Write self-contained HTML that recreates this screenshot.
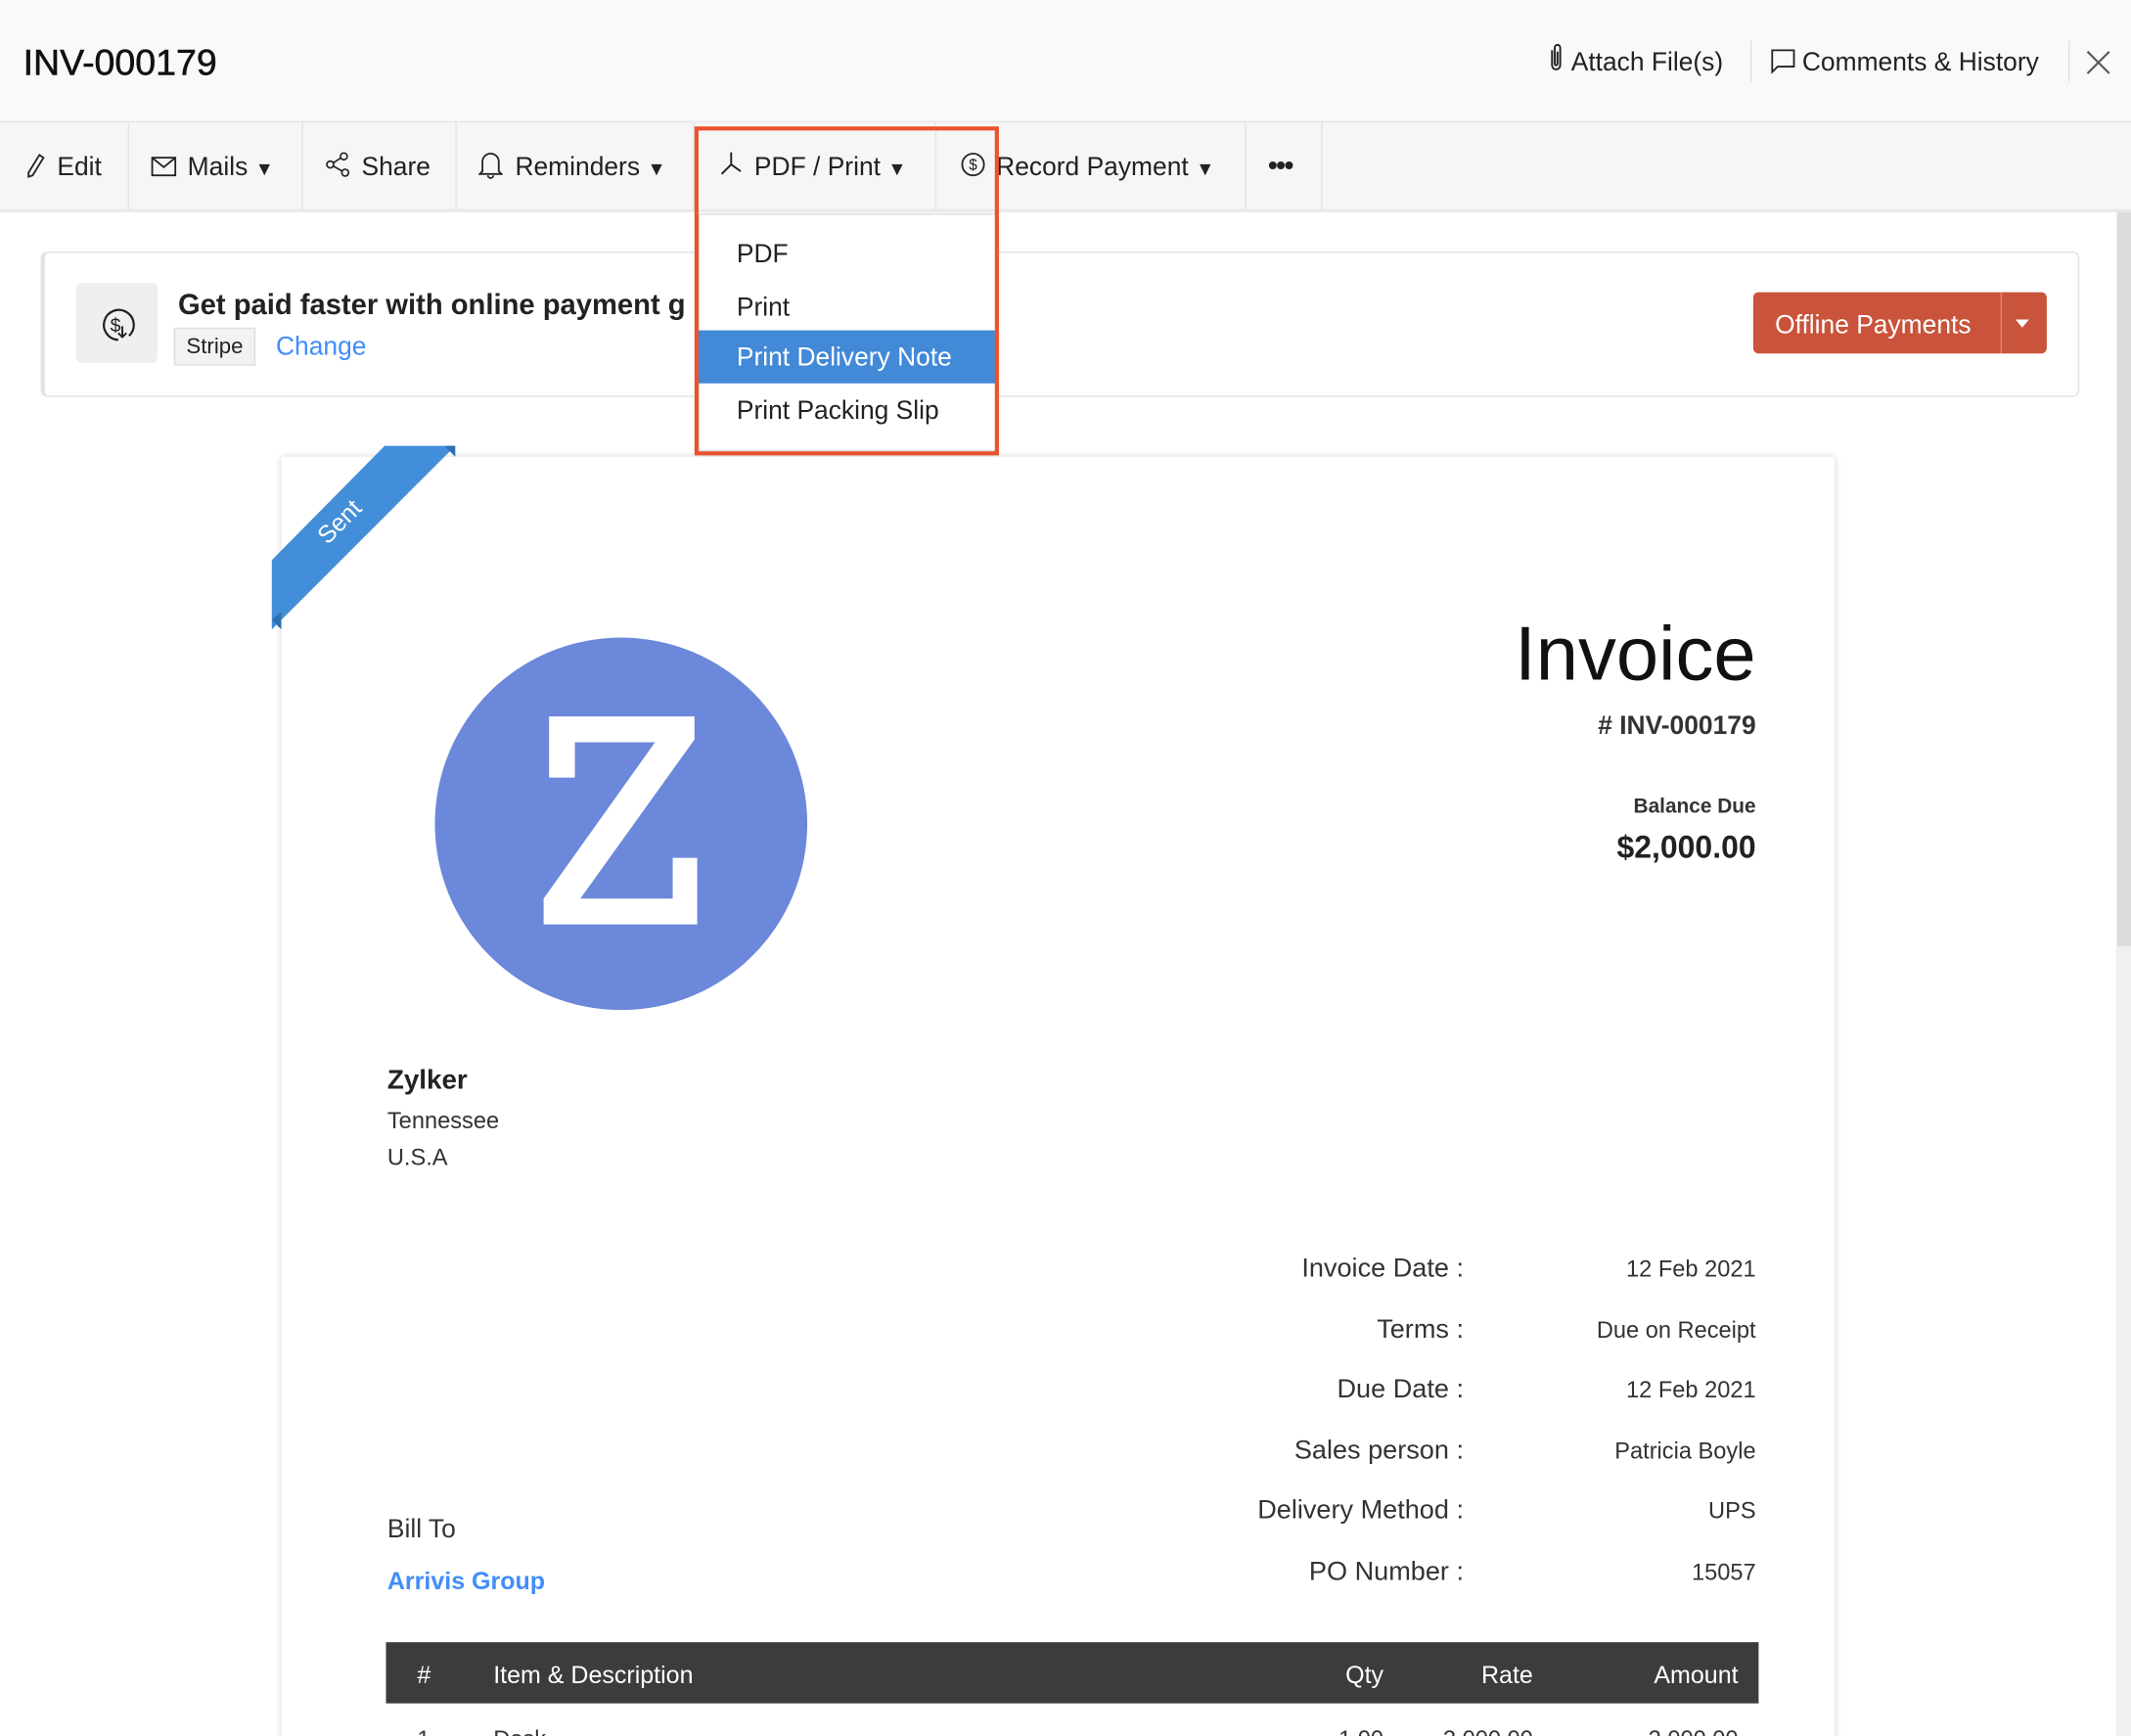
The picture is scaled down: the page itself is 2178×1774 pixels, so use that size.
<!DOCTYPE html>
<html><head><meta charset="utf-8"><style>
html,body{margin:0;padding:0;overflow:hidden;background:#fff}
#w{position:absolute;left:0;top:0;width:1568px;height:1277px;transform:scale(1.38903,1.3892);transform-origin:0 0;font-family:"Liberation Sans",sans-serif;color:#222;overflow:hidden;background:#fff}
.a{position:absolute;white-space:nowrap}
.tb{font-size:19px;color:#222;top:113px}
.sep{position:absolute;top:90px;width:1px;height:65px;background:#e4e4e4}
.lbl{position:absolute;right:491px;font-size:19.5px;color:#333;white-space:nowrap}
.val{position:absolute;right:276px;font-size:17px;color:#333;white-space:nowrap}
</style></head><body><div id="w">
<div class="a" style="left:0;top:0;width:1568px;height:89px;background:#f9f9f9;border-bottom:1px solid #e6e6e6"></div>
<div class="a" style="left:17px;top:31px;font-size:27px;font-weight:500;color:#111;-webkit-text-stroke:0.4px #111">INV-000179</div>
<svg class="a" style="left:1138px;top:31px" width="14" height="24" viewBox="0 0 14 24"><path d="M4 6v11a3 3 0 006 0V4a2 2 0 00-4 0v12a1 1 0 002 0V7" fill="none" stroke="#222" stroke-width="1.4"/></svg>
<div class="a" style="left:1156px;top:36px;font-size:19px">Attach File(s)</div>
<div class="a" style="left:1288px;top:30px;width:1px;height:30px;background:#ddd"></div>
<svg class="a" style="left:1302px;top:35px" width="20" height="20" viewBox="0 0 20 20"><path d="M2 2h16v12H6l-4 4z" fill="none" stroke="#222" stroke-width="1.3"/></svg>
<div class="a" style="left:1326px;top:36px;font-size:19px">Comments &amp; History</div>
<div class="a" style="left:1522px;top:30px;width:1px;height:30px;background:#ddd"></div>
<svg class="a" style="left:1535px;top:37px" width="18" height="18" viewBox="0 0 18 18"><path d="M1 1l16 16M17 1L1 17" stroke="#555" stroke-width="1.5"/></svg>

<div class="a" style="left:0;top:90px;width:1568px;height:64px;background:#f6f6f6;border-bottom:2px solid #e8e8e8"></div>
<svg class="a" style="left:18px;top:112px" width="16" height="20" viewBox="0 0 16 20"><path d="M11 2l3 2-8 13-3 1 0-3z" fill="none" stroke="#222" stroke-width="1.3"/></svg>
<div class="a tb" style="left:42px">Edit</div>
<div class="sep" style="left:94px"></div>
<svg class="a" style="left:111px;top:115px" width="19" height="15" viewBox="0 0 19 15"><rect x="1" y="1" width="17" height="13" fill="none" stroke="#222" stroke-width="1.3"/><path d="M1 1l8.5 7L18 1" fill="none" stroke="#222" stroke-width="1.3"/></svg>
<div class="a tb" style="left:138px">Mails <span style="font-size:14px">▼</span></div>
<div class="sep" style="left:222px"></div>
<svg class="a" style="left:239px;top:111px" width="20" height="20" viewBox="0 0 20 20"><circle cx="4" cy="10" r="2.5" fill="none" stroke="#222" stroke-width="1.2"/><circle cx="14" cy="4" r="2.5" fill="none" stroke="#222" stroke-width="1.2"/><circle cx="15" cy="16" r="2.5" fill="none" stroke="#222" stroke-width="1.2"/><path d="M6 9l6-4M6 11l7 4" stroke="#222" stroke-width="1.2"/></svg>
<div class="a tb" style="left:266px">Share</div>
<div class="sep" style="left:335px"></div>
<svg class="a" style="left:352px;top:110px" width="18" height="22" viewBox="0 0 18 22"><path d="M3 16V9a6 6 0 0112 0v7l2 2H1zM7 19a2 2 0 004 0" fill="none" stroke="#222" stroke-width="1.3"/></svg>
<div class="a tb" style="left:379px">Reminders <span style="font-size:14px">▼</span></div>
<div class="sep" style="left:510px"></div>
<svg class="a" style="left:529px;top:111px" width="18" height="20" viewBox="0 0 18 20"><path d="M9 1v9L2 17M9 10l7 5" fill="none" stroke="#222" stroke-width="1.4"/></svg>
<div class="a tb" style="left:555px">PDF / Print <span style="font-size:14px">▼</span></div>
<div class="sep" style="left:688px"></div>
<svg class="a" style="left:706px;top:111px" width="20" height="20" viewBox="0 0 20 20"><circle cx="10" cy="10" r="8" fill="none" stroke="#222" stroke-width="1.3"/><text x="10" y="14" font-size="11" text-anchor="middle" fill="#222" font-family="Liberation Sans">$</text></svg>
<div class="a tb" style="left:733px">Record Payment <span style="font-size:14px">▼</span></div>
<div class="sep" style="left:916px"></div>
<div class="a" style="left:933px;top:111px;font-size:20px;letter-spacing:-1px;font-weight:bold">•••</div>
<div class="sep" style="left:972px"></div>

<div class="a" style="left:1557px;top:156px;width:11px;height:1121px;background:#f0f0f0"></div>
<div class="a" style="left:1558px;top:156px;width:10px;height:540px;background:#dcdcdc"></div>

<div class="a" style="left:30px;top:185px;width:1496px;height:105px;border:1.5px solid #dfe3e8;border-left-width:3px;border-radius:5px;background:#fff"></div>
<div class="a" style="left:56px;top:208px;width:60px;height:59px;background:#efefef;border-radius:4px"></div>
<svg class="a" style="left:71px;top:223px" width="32" height="32" viewBox="0 0 32 32"><path d="M24 24a11 11 0 10-8 3" fill="none" stroke="#222" stroke-width="1.6"/><text x="14" y="21" font-size="14" text-anchor="middle" fill="#222" font-family="Liberation Sans">$</text><path d="M19 17v8M16 22l3 3 3-3" fill="none" stroke="#222" stroke-width="1.4"/></svg>
<div class="a" style="left:131px;top:213px;font-size:21px;font-weight:bold;color:#222">Get paid faster with online payment g</div>
<div class="a" style="left:128px;top:241px;width:58px;height:26px;background:#f2f2f2;border:1px solid #ddd;font-size:16px;line-height:28px;text-align:center">Stripe</div>
<div class="a" style="left:203px;top:245px;font-size:19px;color:#408dfb">Change</div>
<div class="a" style="left:1290px;top:215px;width:216px;height:45px;background:#c9533b;border-radius:4px"></div>
<div class="a" style="left:1306px;top:229px;font-size:19px;color:#fff">Offline Payments</div>
<div class="a" style="left:1472px;top:215px;width:1px;height:45px;background:#e08873"></div>
<div class="a" style="left:1483px;top:235px;width:0;height:0;border-left:5px solid transparent;border-right:5px solid transparent;border-top:6px solid #fff"></div>

<div class="a" style="left:207px;top:336px;width:1143px;height:960px;background:#fff;box-shadow:0 0 5px rgba(0,0,0,.18)"></div>
<svg class="a" style="left:199px;top:326px" width="140" height="140" viewBox="0 0 140 140"><path d="M1 86L84 2h52L1 137z" fill="#438ed8"/><path d="M1 130l7 -6v13z" fill="#2d6fb3"/><path d="M128 2l8 8v-8z" fill="#2d6fb3"/><text x="0" y="0" transform="translate(55,62) rotate(-45)" fill="#fff" font-size="18" font-family="Liberation Sans" text-anchor="middle">Sent</text></svg>

<svg class="a" style="left:319px;top:468px" width="276" height="276" viewBox="319 468 276 276"><circle cx="457" cy="606" r="137" fill="#6c88da"/><polygon points="404,527 511,527 511,544 427,661 495,661 495,631 513,631 513,680 400,680 400,661 482,546 423,546 423,572 404,572" fill="#fff"/></svg>

<div class="a" style="right:276px;top:448px;font-size:56px;color:#111">Invoice</div>
<div class="a" style="right:276px;top:524px;font-size:19px;font-weight:bold;color:#333"># INV-000179</div>
<div class="a" style="right:276px;top:585px;font-size:15px;font-weight:bold;color:#333">Balance Due</div>
<div class="a" style="right:276px;top:610px;font-size:23px;font-weight:bold;color:#222">$2,000.00</div>

<div class="a" style="left:285px;top:784px;font-size:20px;font-weight:bold;color:#222">Zylker</div>
<div class="a" style="left:285px;top:815px;font-size:17px;color:#333">Tennessee</div>
<div class="a" style="left:285px;top:842px;font-size:17px;color:#333">U.S.A</div>

<div class="lbl" style="top:922px">Invoice Date :</div><div class="val" style="top:924px">12 Feb 2021</div>
<div class="lbl" style="top:967px">Terms :</div><div class="val" style="top:969px">Due on Receipt</div>
<div class="lbl" style="top:1011px">Due Date :</div><div class="val" style="top:1013px">12 Feb 2021</div>
<div class="lbl" style="top:1056px">Sales person :</div><div class="val" style="top:1058px">Patricia Boyle</div>
<div class="lbl" style="top:1100px">Delivery Method :</div><div class="val" style="top:1102px">UPS</div>
<div class="lbl" style="top:1145px">PO Number :</div><div class="val" style="top:1147px">15057</div>

<div class="a" style="left:285px;top:1115px;font-size:19px;color:#333">Bill To</div>
<div class="a" style="left:285px;top:1153px;font-size:18px;color:#408dfb;font-weight:bold">Arrivis Group</div>

<div class="a" style="left:284px;top:1208px;width:1010px;height:45px;background:#3c3c3b"></div>
<div class="a" style="left:307px;top:1222px;font-size:18px;color:#fff">#</div>
<div class="a" style="left:363px;top:1222px;font-size:18px;color:#fff">Item &amp; Description</div>
<div class="a" style="right:550px;top:1222px;font-size:18px;color:#fff">Qty</div>
<div class="a" style="right:440px;top:1222px;font-size:18px;color:#fff">Rate</div>
<div class="a" style="right:289px;top:1222px;font-size:18px;color:#fff">Amount</div>
<div class="a" style="left:307px;top:1270px;font-size:17px;color:#333">1</div>
<div class="a" style="left:363px;top:1270px;font-size:17px;color:#333">Desk</div>
<div class="a" style="right:550px;top:1270px;font-size:17px;color:#333">1.00</div>
<div class="a" style="right:440px;top:1270px;font-size:17px;color:#333">2,000.00</div>
<div class="a" style="right:289px;top:1270px;font-size:17px;color:#333">2,000.00</div>

<div class="a" style="left:514px;top:157px;width:218px;height:173px;background:#fff;border:1px solid #ddd;box-shadow:0 2px 4px rgba(0,0,0,.12)"></div>
<div class="a" style="left:542px;top:177px;font-size:19px">PDF</div>
<div class="a" style="left:542px;top:216px;font-size:19px">Print</div>
<div class="a" style="left:514px;top:243px;width:219px;height:39px;background:#4289d8"></div>
<div class="a" style="left:542px;top:253px;font-size:19px;color:#fff">Print Delivery Note</div>
<div class="a" style="left:542px;top:292px;font-size:19px">Print Packing Slip</div>
<div class="a" style="left:511px;top:93px;width:218px;height:236px;border:3px solid #ea5230"></div>
</div></body></html>
